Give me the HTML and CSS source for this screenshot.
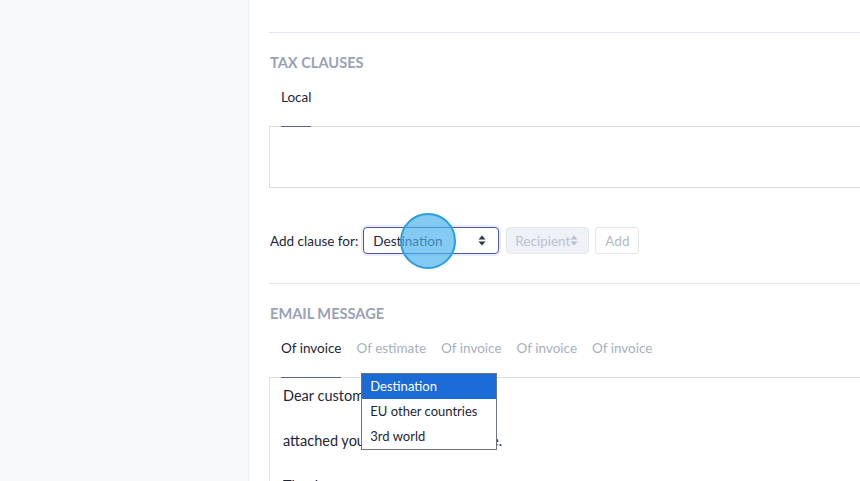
FILE: index.html
```html
<!DOCTYPE html>
<html>
<head>
<meta charset="utf-8">
<link rel="stylesheet" href="styles.css">
</head>
<body>
<div class="app">
  <aside class="sidebar"></aside>
  <main class="main">
    <hr class="rule">
    <h2 class="heading">TAX CLAUSES</h2>
    <nav class="tabs">
      <span class="tab active">Local</span>
    </nav>
    <div class="box box-small"></div>

    <div class="clause-row">
      <span class="label">Add clause for:</span>
      <div class="select-wrap">
        <div class="select focused">
          <span>Destination</span>
          <span class="arrows"><svg width="8" height="11" viewBox="0 0 8 11"><path d="M4 0.5L7.5 4.5H0.5Z" fill="#2b3445"/><path d="M4 10.5L7.5 6.5H0.5Z" fill="#2b3445"/></svg></span>
        </div>
        <ul class="dropdown">
          <li class="opt selected">Destination</li>
          <li class="opt">EU other countries</li>
          <li class="opt">3rd world</li>
        </ul>
        <div class="touch"></div>
      </div>
      <div class="select disabled">
        <span>Recipient</span>
        <span class="arrows"><svg width="8" height="11" viewBox="0 0 8 11"><path d="M4 0.5L7.5 4.5H0.5Z" fill="#b8c1d1"/><path d="M4 10.5L7.5 6.5H0.5Z" fill="#b8c1d1"/></svg></span>
      </div>
      <button class="btn">Add</button>
    </div>

    <hr class="rule">
    <h2 class="heading">EMAIL MESSAGE</h2>
    <nav class="tabs">
      <span class="tab active">Of invoice</span>
      <span class="tab">Of estimate</span>
      <span class="tab">Of invoice</span>
      <span class="tab">Of invoice</span>
      <span class="tab">Of invoice</span>
    </nav>
    <div class="box box-msg">
      <p>Dear customer,</p>
      <p>attached you will find your invoice.</p>
      <p>Thank you,</p>
    </div>
  </main>
</div>
</body>
</html>
```

FILE: styles.css
```css
html, body {
  margin: 0;
  padding: 0;
  height: 100%;
  overflow: hidden;
  background: #ffffff;
  font-family: "Lato", "Liberation Sans", sans-serif;
  color: #1f2937;
}

.app {
  display: flex;
  height: 481px;
}

.sidebar {
  flex: none;
  width: 248px;
  background: #f8f9fb;
  border-right: 1px solid #eef0f4;
}

.main {
  flex: none;
  width: 720px;
  padding: 32px 0 0 20px;
  box-sizing: border-box;
}

.rule {
  margin: 0;
  border: 0;
  border-top: 1px solid #e3e6ec;
  height: 0;
}

.heading {
  margin: 20px 0 0 1px;
  font-size: 14.6px;
  line-height: 20px;
  font-weight: 700;
  color: #98a2b6;
  letter-spacing: 0;
}

.tabs {
  display: flex;
  gap: 15px;
  padding-left: 12px;
  margin-top: 4px;
}

.tab {
  font-size: 13.5px;
  line-height: 20px;
  padding: 10px 0 19px;
  color: #a6b0c2;
  margin-bottom: -1px;
  position: relative;
  z-index: 1;
}

.tab.active {
  color: #1e2636;
  border-bottom: 1px solid #5b6387;
}

.box {
  border: 1px solid #dadde3;
  border-right: 0;
}

.box-small {
  height: 60px;
}

.box-msg {
  padding: 7px 0 0 13px;
  font-size: 14.5px;
  line-height: 22.5px;
  color: #1e2636;
  height: 200px;
}

.box-msg p {
  margin: 0 0 22.5px;
}

.clause-row {
  display: flex;
  align-items: center;
  margin: 39px 0 29px 1px;
  height: 27px;
}

.label {
  font-size: 13.5px;
  color: #1e2636;
  margin-right: 5px;
}

.select-wrap {
  position: relative;
  margin-right: 7px;
}

.select {
  height: 27px;
  box-sizing: border-box;
  display: flex;
  align-items: center;
  justify-content: space-between;
  font-size: 13.5px;
  border-radius: 4px;
}

.select.focused {
  width: 136px;
  border: 1px solid #4b58a6;
  box-shadow: 0 0 0 2px rgba(96, 110, 220, 0.12);
  padding: 0 12px 0 9px;
  color: #1e2636;
  background: #fff;
}

.select.disabled {
  width: 83px;
  background: #eef1f6;
  border: 1px solid #e4e8ee;
  color: #b9c2d2;
  padding: 0 10px 0 8px;
  margin-right: 6px;
}

.select.disabled .arrows {
  margin-left: -8px;
}

.arrows {
  display: flex;
  align-items: center;
}

.btn {
  height: 27px;
  padding: 0 9px;
  font-family: inherit;
  font-size: 13.5px;
  color: #b1b9c7;
  background: #fff;
  border: 1px solid #e3e6eb;
  border-radius: 3px;
}

.dropdown {
  position: absolute;
  left: -2px;
  top: 146px;
  width: 136px;
  box-sizing: border-box;
  margin: 0;
  padding: 0;
  list-style: none;
  background: #fff;
  border: 1px solid #6f7580;
  z-index: 5;
}

.opt {
  font-size: 13px;
  line-height: 25px;
  height: 25px;
  padding-left: 8px;
  color: #1e2636;
}

.opt.selected {
  background: #1b6bd6;
  color: #fff;
}

.touch {
  position: absolute;
  left: 37px;
  top: -14px;
  width: 52px;
  height: 52px;
  border-radius: 50%;
  background: rgba(74, 178, 238, 0.68);
  border: 2px solid #2a9de0;
  z-index: 6;
}
```
